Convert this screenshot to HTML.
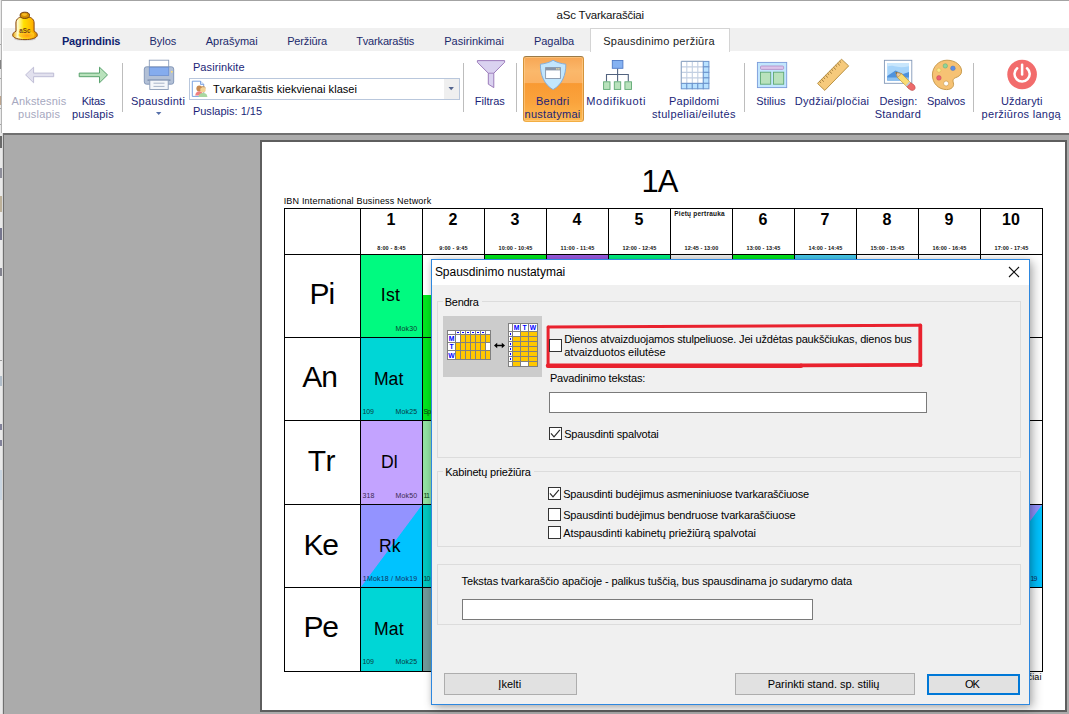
<!DOCTYPE html>
<html><head><meta charset="utf-8"><title>aSc Tvarkaraščiai</title>
<style>
html,body{margin:0;padding:0;}
body{width:1069px;height:714px;overflow:hidden;background:#ababab;position:relative;font-family:'Liberation Sans',sans-serif;}
#app{position:absolute;left:0;top:0;width:1069px;height:714px;overflow:hidden;}
#app div,#app span,#app svg{position:absolute;}
#app span{white-space:pre;}
#app div{box-sizing:border-box;}
</style></head><body><div id="app">
<div style="left:0px;top:0px;width:2px;height:714px;background:#e9e9e9;"></div>
<div style="left:1px;top:0px;width:1px;height:133px;background:#b4b4b4;"></div>
<div style="left:0px;top:60px;width:1px;height:9px;background:#555;opacity:.7;"></div>
<div style="left:0px;top:44px;width:1px;height:1px;background:#888;opacity:.7;"></div>
<div style="left:0px;top:78px;width:1px;height:1px;background:#888;opacity:.7;"></div>
<div style="left:0px;top:96px;width:1px;height:9px;background:#a86;opacity:.7;"></div>
<div style="left:0px;top:108px;width:1px;height:1px;background:#888;opacity:.7;"></div>
<div style="left:0px;top:124px;width:1px;height:1px;background:#888;opacity:.7;"></div>
<div style="left:0px;top:136px;width:2px;height:12px;background:#333;opacity:.7;"></div>
<div style="left:0px;top:168px;width:2px;height:10px;background:#667;opacity:.7;"></div>
<div style="left:0px;top:196px;width:2px;height:16px;background:#a97;opacity:.7;"></div>
<div style="left:0px;top:228px;width:2px;height:12px;background:#446;opacity:.7;"></div>
<div style="left:0px;top:268px;width:2px;height:8px;background:#556;opacity:.7;"></div>
<div style="left:0px;top:360px;width:2px;height:1px;background:#777;opacity:.7;"></div>
<div style="left:0px;top:376px;width:2px;height:10px;background:#9ab;opacity:.7;"></div>
<div style="left:0px;top:424px;width:2px;height:6px;background:#557;opacity:.7;"></div>
<div style="left:0px;top:440px;width:2px;height:6px;background:#557;opacity:.7;"></div>
<div style="left:0px;top:470px;width:2px;height:30px;background:#bcd;opacity:.7;"></div>
<div style="left:2px;top:0px;width:1067px;height:1px;background:#a3a3a3;"></div>
<div style="left:2px;top:1px;width:1067px;height:27px;background:#fff;"></div>
<div style="left:2px;top:28px;width:1067px;height:23px;background:#f0f0f0;"></div>
<div style="left:2px;top:28px;width:1px;height:23px;background:#fff;"></div>
<div style="left:2px;top:51px;width:1067px;height:82px;background:#fff;"></div>
<div style="left:3px;top:133px;width:1066px;height:2px;background:#707070;"></div>
<div style="left:3px;top:135px;width:1px;height:579px;background:#707070;"></div>
<div style="left:2px;top:133px;width:1px;height:581px;background:#d6d6d6;"></div>
<div style="left:590px;top:28px;width:140px;height:24px;background:#fff;border:1px solid #d4d4d4;border-bottom:none;"></div>
<span style="left:556.6px;top:8px;font-size:11.5px;line-height:14px;color:#111;letter-spacing:-0.23px;">aSc Tvarkaraščiai</span>
<span style="left:61.9px;top:35px;font-size:11px;line-height:13px;color:#0f1f6e;font-weight:700;letter-spacing:-0.13px;">Pagrindinis</span>
<span style="left:149.6px;top:35px;font-size:11px;line-height:13px;color:#1c2a6c;letter-spacing:-0.08px;">Bylos</span>
<span style="left:205.7px;top:35px;font-size:11px;line-height:13px;color:#1c2a6c;">Aprašymai</span>
<span style="left:287.2px;top:35px;font-size:11px;line-height:13px;color:#1c2a6c;letter-spacing:-0.16px;">Peržiūra</span>
<span style="left:356.2px;top:35px;font-size:11px;line-height:13px;color:#1c2a6c;letter-spacing:-0.16px;">Tvarkaraštis</span>
<span style="left:444.2px;top:35px;font-size:11px;line-height:13px;color:#1c2a6c;letter-spacing:0.04px;">Pasirinkimai</span>
<span style="left:534.0px;top:35px;font-size:11px;line-height:13px;color:#1c2a6c;letter-spacing:-0.05px;">Pagalba</span>
<span style="left:603.2px;top:35px;font-size:11px;line-height:13px;color:#1a1a1a;letter-spacing:0.26px;">Spausdinimo peržiūra</span>
<div style="left:122px;top:63px;width:1px;height:49px;background:#bdbdbd;"></div>
<div style="left:463px;top:63px;width:1px;height:49px;background:#bdbdbd;"></div>
<div style="left:516px;top:63px;width:1px;height:49px;background:#bdbdbd;"></div>
<div style="left:744px;top:63px;width:1px;height:49px;background:#bdbdbd;"></div>
<div style="left:973px;top:63px;width:1px;height:49px;background:#bdbdbd;"></div>
<div style="left:189px;top:78px;width:271px;height:22px;background:#fff;border:1px solid #b9c7dc;"></div>
<div style="left:444px;top:79px;width:15px;height:20px;background:#efefef;"></div>
<svg style="left:8px;top:6px" width="40" height="40" viewBox="8 6 40 40" ><defs><linearGradient id="bg1" x1="0" x2="1" y1="0" y2="0"><stop offset="0" stop-color="#e8a400"/><stop offset=".2" stop-color="#fffbd0"/><stop offset=".45" stop-color="#ffe000"/><stop offset=".8" stop-color="#ffb400"/><stop offset="1" stop-color="#d88a00"/></linearGradient>
<radialGradient id="bg2" cx=".55" cy=".6" r=".6"><stop offset="0" stop-color="#ff9a10"/><stop offset="1" stop-color="#ffd820"/></radialGradient></defs>
<ellipse cx="25" cy="39" rx="11" ry="1.6" fill="#999" opacity=".45"/>
<path d="M16 31.200L15.900 23C15.900 18.500 19.500 16.600 24.900 16.600C30.300 16.600 34.100 18.500 34.100 23L34.100 31.200C36.600 32.300 37.300 33.800 37.300 35.200C37.300 38 31.500 39.600 25 39.600C18.500 39.600 12.700 38 12.700 35.200C12.700 33.800 13.400 32.300 16 31.200Z" fill="url(#bg1)" stroke="#8a4810" stroke-width="1"/>
<ellipse cx="26.500" cy="35" rx="8" ry="3.400" fill="url(#bg2)" opacity=".95"/>
<ellipse cx="24.800" cy="15.300" rx="4.700" ry="3.100" fill="#d48e00" stroke="#703c0c" stroke-width="1"/>
<ellipse cx="24.5" cy="14.6" rx="2.6" ry="1.3" fill="#ffc830" opacity=".8"/>
<text x="24.9" y="32.6" font-family="Liberation Sans,sans-serif" font-weight="700" font-size="6.300" fill="#7a3e10" text-anchor="middle">aSc</text></svg>
<svg style="left:22px;top:64px" width="90" height="22" viewBox="22 64 90 22" ><path d="M25.6 74.9L33.6 67.2V73.1H53.7V76.7H33.6V82.8Z" fill="#e2e1ee" stroke="#bab8d2" stroke-width=".9" stroke-linejoin="miter"/>
<path d="M107.5 74.9L99.5 67.2V73.1H79.2V76.7H99.5V82.8Z" fill="#b9e2bc" stroke="#4c9a62" stroke-width=".9"/></svg>
<svg style="left:142px;top:58px" width="34" height="34" viewBox="142 58 34 34" ><rect x="149.3" y="60.2" width="19.4" height="9" fill="#fff" stroke="#8a9cb8" stroke-width=".9"/>
<rect x="144.3" y="66.8" width="29.4" height="17.4" rx="2.2" fill="#b2c0d6" stroke="#7e92b4" stroke-width=".9"/>
<rect x="149.3" y="67.3" width="19.4" height="8.2" fill="#85acee" stroke="#6c8fd0" stroke-width=".8"/>
<rect x="171" y="71" width="1.6" height="1.6" fill="#ffe070"/>
<rect x="147.5" y="79.4" width="23" height="1.6" fill="#8496b4"/>
<rect x="149.8" y="80.2" width="18.4" height="9.3" fill="#f4f6fa" stroke="#8a9cb8" stroke-width=".9"/>
<path d="M153.5 83.2h11M153.5 86.4h11" stroke="#a8b4c8" stroke-width="1"/>
<path d="M156 112h5.2l-2.6 2.8z" fill="#4e6aa8"/></svg>
<svg style="left:155px;top:111px" width="8" height="5" viewBox="0 0 8 5"><path d="M1 1h5.4L3.7 4z" fill="#5670aa"/></svg>
<svg style="left:190px;top:80px" width="20" height="19" viewBox="190 80 20 19" ><path d="M192.3 81.2h8.2l3.2 3.2v12h-11.4z" fill="#fff" stroke="#5a8ad8" stroke-width=".8"/><path d="M200.5 81.2v3.2h3.2" fill="#dce8fa" stroke="#5a8ad8" stroke-width=".7"/>
<circle cx="199.3" cy="88.5" r="2.9" fill="#c88a50"/><path d="M195.2 95.6c.4-3.4 2-4.4 4.1-4.4s3.6 1 4 4.4z" fill="#f08080"/>
<circle cx="203" cy="89.8" r="2.7" fill="#f4d294"/><path d="M200.8 87.8c1-1.6 3.8-1.6 4.8.2" stroke="#c89050" stroke-width="1" fill="none"/><path d="M198.6 97c.4-3.2 2-4 4.4-4s4 .8 4.4 4z" fill="#a8d8a0"/></svg>
<svg style="left:474px;top:58px" width="34" height="32" viewBox="474 58 34 32" ><path d="M477.4 60.6H504.6V62.3L493.8 73.2V87.6L488.3 84.2V73.2L477.4 62.3Z" fill="#dad2f0" stroke="#936fb4" stroke-width=".9" stroke-linejoin="round"/><path d="M488.3 73.2H493.8" stroke="#936fb4" stroke-width=".8"/></svg>
<div style="left:523px;top:56px;width:61px;height:66px;background:#f9a53f;border:1px solid #d4933a;border-top-color:#9a7a48;border-bottom-color:#f3ae42;border-radius:3px;background:linear-gradient(#f7a654 0%,#fbb86b 22%,#fbb162 40.5%,#f99a33 41.5%,#faa33c 70%,#fdb850 100%);box-shadow:inset 0 0 0 1px rgba(255,214,150,.55);"></div>
<svg style="left:538px;top:58px" width="30" height="34" viewBox="538 58 30 34" ><path d="M553.1 60.3C557 62.6 561 63.6 565.8 64.2C566 75 562 84.5 553.1 89.6C544.2 84.5 540.2 75 540.4 64.2C545.2 63.6 549.2 62.6 553.1 60.3Z" fill="#c2e6fd" stroke="#7daadc" stroke-width=".9"/>
<rect x="545.6" y="67.6" width="14.8" height="10.9" fill="#fff" stroke="#8796aa" stroke-width=".9"/><rect x="545.6" y="67.6" width="14.8" height="2.8" fill="#8796aa"/><rect x="556.2" y="68.2" width="1.3" height="1.3" fill="#ffe9a0"/><rect x="558.2" y="68.2" width="1.3" height="1.3" fill="#ffe9a0"/></svg>
<svg style="left:601px;top:58px" width="33" height="34" viewBox="601 58 33 34" ><path d="M617.6 68.4V81.5M606.5 81.5V74.5H628.3V81.5" stroke="#52637f" stroke-width="1.1" fill="none"/>
<rect x="612.3" y="60.5" width="10.6" height="7.8" fill="#85b2f2" stroke="#4f7ac6" stroke-width=".9"/>
<rect x="603.6" y="81.8" width="6.4" height="7.6" fill="#b9e2bc" stroke="#5fa873" stroke-width=".9"/>
<rect x="614.3" y="81.8" width="6.4" height="7.6" fill="#b9e2bc" stroke="#5fa873" stroke-width=".9"/>
<rect x="624.9" y="81.8" width="6.6" height="7.6" fill="#b9e2bc" stroke="#5fa873" stroke-width=".9"/></svg>
<svg style="left:679px;top:59px" width="32" height="32" viewBox="679 59 32 32" ><rect x="681.3" y="61.4" width="27.6" height="27.2" fill="#fff"/><path d="M681.3 61.4V83.4M681.3 61.4H703.3" stroke="#c3d0e2" stroke-width="1.1"/><path d="M686.8 61.4V83.4M681.3 66.9H703.3" stroke="#c3d0e2" stroke-width="1.1"/><path d="M692.3 61.4V83.4M681.3 72.4H703.3" stroke="#c3d0e2" stroke-width="1.1"/><path d="M697.8 61.4V83.4M681.3 77.9H703.3" stroke="#c3d0e2" stroke-width="1.1"/><path d="M703.3 61.4V83.4M681.3 83.4H703.3" stroke="#c3d0e2" stroke-width="1.1"/><rect x="703.3" y="61.4" width="5.6" height="5.4" fill="#b9e2ff" stroke="#6c94cc" stroke-width="1"/><rect x="681.3" y="83.4" width="5.5" height="5.4" fill="#b9e2ff" stroke="#6c94cc" stroke-width="1"/><rect x="703.3" y="66.9" width="5.6" height="5.4" fill="#b9e2ff" stroke="#6c94cc" stroke-width="1"/><rect x="686.8" y="83.4" width="5.5" height="5.4" fill="#b9e2ff" stroke="#6c94cc" stroke-width="1"/><rect x="703.3" y="72.4" width="5.6" height="5.4" fill="#b9e2ff" stroke="#6c94cc" stroke-width="1"/><rect x="692.3" y="83.4" width="5.5" height="5.4" fill="#b9e2ff" stroke="#6c94cc" stroke-width="1"/><rect x="703.3" y="77.9" width="5.6" height="5.4" fill="#b9e2ff" stroke="#6c94cc" stroke-width="1"/><rect x="697.8" y="83.4" width="5.5" height="5.4" fill="#b9e2ff" stroke="#6c94cc" stroke-width="1"/><rect x="703.3" y="83.4" width="5.6" height="5.4" fill="#b9e2ff" stroke="#6c94cc" stroke-width="1"/><path d="M681.3 83.4V61.4H703.3" stroke="#8aa0c0" stroke-width=".9" fill="none"/></svg>
<svg style="left:755px;top:60px" width="34" height="30" viewBox="755 60 34 30" ><rect x="757.4" y="62.4" width="29.3" height="25.2" fill="#c2e6fd" stroke="#7a9ada" stroke-width=".9"/>
<rect x="760.5" y="66" width="23.1" height="3.4" rx="1" fill="#dcc4ea" stroke="#b292ca" stroke-width=".9"/>
<rect x="760.5" y="72.2" width="10.2" height="12" fill="#b9e2bc" stroke="#5fa873" stroke-width=".9"/>
<rect x="773.5" y="72.2" width="10.2" height="12" fill="#b9e2bc" stroke="#5fa873" stroke-width=".9"/></svg>
<svg style="left:815px;top:57px" width="36" height="36" viewBox="815 57 36 36" ><path d="M841.5 59.2L848.7 65.9L824.8 90.4L817.5 83.4Z" fill="#f6ca7c" stroke="#b28a3a" stroke-width=".9" stroke-linejoin="round"/><path d="M819.5 81.4l1.6 1.5" stroke="#8a6424" stroke-width=".8"/><path d="M821.5 79.4l2.3 2.2" stroke="#8a6424" stroke-width=".8"/><path d="M823.5 77.4l1.6 1.5" stroke="#8a6424" stroke-width=".8"/><path d="M825.5 75.3l2.3 2.2" stroke="#8a6424" stroke-width=".8"/><path d="M827.5 73.3l1.6 1.5" stroke="#8a6424" stroke-width=".8"/><path d="M829.5 71.3l2.3 2.2" stroke="#8a6424" stroke-width=".8"/><path d="M831.5 69.3l1.6 1.5" stroke="#8a6424" stroke-width=".8"/><path d="M833.5 67.3l2.3 2.2" stroke="#8a6424" stroke-width=".8"/><path d="M835.5 65.2l1.6 1.5" stroke="#8a6424" stroke-width=".8"/><path d="M837.5 63.2l2.3 2.2" stroke="#8a6424" stroke-width=".8"/><path d="M839.5 61.2l1.6 1.5" stroke="#8a6424" stroke-width=".8"/></svg>
<svg style="left:882px;top:58px" width="36" height="36" viewBox="882 58 36 36" ><rect x="884.4" y="60.3" width="27.4" height="23" fill="#fff" stroke="#8298b8" stroke-width=".9"/>
<rect x="887.2" y="63" width="21.8" height="17.4" fill="#a6d4fa"/><path d="M887.2 66.5c4-1.6 7-.4 10.5.3s7 .2 11.300-.6V63H887.2Z" fill="#c8e6fc"/>
<path d="M887.2 76L895.5 70.5L903 74L909 72V80.400H887.2Z" fill="#4f92dc"/><path d="M887.2 77.500H909V80.400H887.2Z" fill="#8cc0f0"/>
<path d="M895.8 72.300L901.600 73.700L912.800 84.800L908.800 88.600L897.500 77.600Z" fill="#f9dc74" stroke="#c0983c" stroke-width=".7"/>
<path d="M895.8 72.300L901.600 73.700L897.500 77.600Z" fill="#e8c8a0" stroke="#b08850" stroke-width=".6"/><path d="M895.8 72.300L897.6 72.800L896.300 74Z" fill="#555"/>
<path d="M910.600 82.700L906.800 86.600L909.200 89C911 90.800 913.200 90.800 914.400 89.600C915.600 88.400 915.400 86.400 913.600 84.600Z" fill="#ee6a6a" stroke="#b84848" stroke-width=".6"/>
<path d="M909.400 81.500L905.600 85.400L906.800 86.600L910.600 82.700Z" fill="#c0c8d8"/></svg>
<svg style="left:930px;top:58px" width="34" height="34" viewBox="930 58 34 34" ><path d="M947 60.200C955.500 60.200 961.600 65.400 961.600 71.200C961.600 75 958.500 76.600 955.800 77.600C953 78.600 952.600 80.400 953.400 83C954.400 86.400 951.600 89.600 946.600 89.600C938.400 89.600 932.400 83.200 932.400 75C932.400 66.800 938.800 60.200 947 60.200Z" fill="#f6c274" stroke="#c29444" stroke-width=".9"/>
<circle cx="945.3" cy="65.9" r="2.2" fill="#8fd49a" stroke="#5fa873" stroke-width=".5"/><circle cx="952.9" cy="68.300" r="2.3" fill="#5c8fe6" stroke="#4c74c0" stroke-width=".5"/>
<circle cx="938.9" cy="70.200" r="2.1" fill="#fbe88a" stroke="#d0b050" stroke-width=".5"/><circle cx="938.9" cy="77.900" r="2.300" fill="#ee6070" stroke="#c04858" stroke-width=".5"/>
<circle cx="946.1" cy="83.500" r="2.500" fill="#fff" stroke="#c29444" stroke-width=".6"/></svg>
<svg style="left:1005px;top:58px" width="34" height="34" viewBox="1005 58 34 34" ><circle cx="1022.1" cy="74.500" r="14.800" fill="#f26c6c"/>
<path d="M1017.200 68.200A7.600 7.600 0 1 0 1027 68.200" fill="none" stroke="#fff" stroke-width="2.500" stroke-linecap="round"/><path d="M1022.100 64.800V74.600" stroke="#fff" stroke-width="2.500" stroke-linecap="round"/></svg>
<span style="left:11.4px;top:95px;font-size:11px;line-height:13px;color:#a6a8c0;letter-spacing:0.18px;">Ankstesnis</span>
<span style="left:18.1px;top:108px;font-size:11px;line-height:13px;color:#a6a8c0;letter-spacing:0.22px;">puslapis</span>
<span style="left:81.7px;top:95px;font-size:11px;line-height:13px;color:#1b1f78;letter-spacing:-0.21px;">Kitas</span>
<span style="left:72.0px;top:108px;font-size:11px;line-height:13px;color:#1b1f78;letter-spacing:0.19px;">puslapis</span>
<span style="left:130.9px;top:95px;font-size:11px;line-height:13px;color:#1b1f78;letter-spacing:0.29px;">Spausdinti</span>
<span style="left:192.9px;top:61px;font-size:11px;line-height:13px;color:#1b1f78;letter-spacing:0.10px;">Pasirinkite</span>
<span style="left:192.9px;top:105px;font-size:11px;line-height:13px;color:#1b1f78;letter-spacing:0.01px;">Puslapis: 1/15</span>
<svg style="left:448px;top:87px" width="7" height="4" viewBox="0 0 7 4"><path d="M.500 0h5.400L3.200 3.200z" fill="#53648e"/></svg>
<span style="left:213.1px;top:83px;font-size:11px;line-height:13px;color:#000;letter-spacing:0.05px;">Tvarkaraštis kiekvienai klasei</span>
<span style="left:474.8px;top:95px;font-size:11px;line-height:13px;color:#1b1f78;letter-spacing:0.02px;">Filtras</span>
<span style="left:536.0px;top:95px;font-size:11px;line-height:13px;color:#1b1f78;letter-spacing:0.27px;">Bendri</span>
<span style="left:524.5px;top:108px;font-size:11px;line-height:13px;color:#1b1f78;letter-spacing:0.29px;">nustatymai</span>
<span style="left:586.3px;top:95px;font-size:11px;line-height:13px;color:#1b1f78;letter-spacing:0.65px;">Modifikuoti</span>
<span style="left:669.1px;top:95px;font-size:11px;line-height:13px;color:#1b1f78;letter-spacing:0.18px;">Papildomi</span>
<span style="left:651.9px;top:108px;font-size:11px;line-height:13px;color:#1b1f78;letter-spacing:0.35px;">stulpeliai/eilutės</span>
<span style="left:756.3px;top:95px;font-size:11px;line-height:13px;color:#1b1f78;letter-spacing:-0.01px;">Stilius</span>
<span style="left:794.8px;top:95px;font-size:11px;line-height:13px;color:#1b1f78;letter-spacing:0.28px;">Dydžiai/pločiai</span>
<span style="left:879.4px;top:95px;font-size:11px;line-height:13px;color:#1b1f78;letter-spacing:0.09px;">Design:</span>
<span style="left:874.8px;top:108px;font-size:11px;line-height:13px;color:#1b1f78;letter-spacing:0.19px;">Standard</span>
<span style="left:927.1px;top:95px;font-size:11px;line-height:13px;color:#1b1f78;letter-spacing:-0.18px;">Spalvos</span>
<span style="left:1001.0px;top:95px;font-size:11px;line-height:13px;color:#1b1f78;letter-spacing:0.16px;">Uždaryti</span>
<span style="left:981.6px;top:108px;font-size:11px;line-height:13px;color:#1b1f78;letter-spacing:0.28px;">peržiūros langą</span>
<div style="left:260px;top:140px;width:807px;height:572px;background:#fff;border:2px solid #5e5e5e;"></div>
<span style="left:641.6px;top:163px;font-size:31px;line-height:37px;color:#000;letter-spacing:-1.20px;">1A</span>
<span style="left:283.7px;top:196px;font-size:9px;line-height:11px;color:#000;letter-spacing:0.18px;">IBN International Business Network</span>
<div style="left:361px;top:255px;width:61px;height:82px;background:#00fa80;"></div>
<div style="left:361px;top:338px;width:61px;height:82px;background:#00d6d6;"></div>
<div style="left:361px;top:421px;width:61px;height:83px;background:#c3a3ff;"></div>
<div style="left:361px;top:588px;width:61px;height:83px;background:#00d6d6;"></div>
<div style="left:361px;top:505px;width:61px;height:82px;background:#00c3ff;background:linear-gradient(to bottom right,#9393ff 49.6%,#00c3ff 50.4%);"></div>
<div style="left:981px;top:505px;width:61px;height:82px;background:#00c3ff;background:linear-gradient(to bottom right,#9393ff 49.6%,#00c3ff 50.4%);"></div>
<div style="left:423px;top:295px;width:61px;height:42px;background:#00e61e;"></div>
<div style="left:423px;top:338px;width:61px;height:82px;background:#00e61e;"></div>
<div style="left:423px;top:421px;width:61px;height:83px;background:#92e2a2;"></div>
<div style="left:423px;top:505px;width:61px;height:82px;background:#00c8c0;"></div>
<div style="left:423px;top:588px;width:61px;height:83px;background:#6f9a9a;"></div>
<div style="left:485px;top:255px;width:61px;height:82px;background:#00e61e;"></div>
<div style="left:547px;top:255px;width:61px;height:82px;background:#9a5ae0;"></div>
<div style="left:609px;top:255px;width:61px;height:82px;background:#00f080;"></div>
<div style="left:671px;top:255px;width:61px;height:82px;background:#ececec;"></div>
<div style="left:733px;top:255px;width:61px;height:82px;background:#00e61e;"></div>
<div style="left:795px;top:255px;width:61px;height:82px;background:#45c8ea;"></div>
<div style="left:284px;top:208px;width:1px;height:464px;background:#000;"></div>
<div style="left:360px;top:208px;width:1px;height:464px;background:#000;"></div>
<div style="left:422px;top:208px;width:1px;height:464px;background:#000;"></div>
<div style="left:484px;top:208px;width:1px;height:464px;background:#000;"></div>
<div style="left:546px;top:208px;width:1px;height:464px;background:#000;"></div>
<div style="left:608px;top:208px;width:1px;height:464px;background:#000;"></div>
<div style="left:670px;top:208px;width:1px;height:464px;background:#000;"></div>
<div style="left:732px;top:208px;width:1px;height:464px;background:#000;"></div>
<div style="left:794px;top:208px;width:1px;height:464px;background:#000;"></div>
<div style="left:856px;top:208px;width:1px;height:464px;background:#000;"></div>
<div style="left:918px;top:208px;width:1px;height:464px;background:#000;"></div>
<div style="left:980px;top:208px;width:1px;height:464px;background:#000;"></div>
<div style="left:1042px;top:208px;width:1px;height:464px;background:#000;"></div>
<div style="left:284px;top:208px;width:759px;height:1px;background:#000;"></div>
<div style="left:284px;top:254px;width:759px;height:1px;background:#000;"></div>
<div style="left:284px;top:337px;width:759px;height:1px;background:#000;"></div>
<div style="left:284px;top:420px;width:759px;height:1px;background:#000;"></div>
<div style="left:284px;top:504px;width:759px;height:1px;background:#000;"></div>
<div style="left:284px;top:587px;width:759px;height:1px;background:#000;"></div>
<div style="left:284px;top:671px;width:759px;height:1px;background:#000;"></div>
<span style="left:386.5px;top:210px;font-size:16px;line-height:19px;color:#000;font-weight:700;letter-spacing:-0.11px;">1</span>
<span style="left:377.2px;top:245px;font-size:5.5px;line-height:7px;color:#111;font-weight:700;letter-spacing:0.15px;">8:00 - 8:45</span>
<span style="left:448.5px;top:210px;font-size:16px;line-height:19px;color:#000;font-weight:700;letter-spacing:-0.11px;">2</span>
<span style="left:439.2px;top:245px;font-size:5.5px;line-height:7px;color:#111;font-weight:700;letter-spacing:0.15px;">9:00 - 9:45</span>
<span style="left:510.5px;top:210px;font-size:16px;line-height:19px;color:#000;font-weight:700;letter-spacing:-0.11px;">3</span>
<span style="left:498.6px;top:245px;font-size:5.5px;line-height:7px;color:#111;font-weight:700;letter-spacing:0.05px;">10:00 - 10:45</span>
<span style="left:572.5px;top:210px;font-size:16px;line-height:19px;color:#000;font-weight:700;letter-spacing:-0.11px;">4</span>
<span style="left:560.6px;top:245px;font-size:5.5px;line-height:7px;color:#111;font-weight:700;letter-spacing:0.10px;">11:00 - 11:45</span>
<span style="left:634.5px;top:210px;font-size:16px;line-height:19px;color:#000;font-weight:700;letter-spacing:-0.11px;">5</span>
<span style="left:622.6px;top:245px;font-size:5.5px;line-height:7px;color:#111;font-weight:700;letter-spacing:0.05px;">12:00 - 12:45</span>
<span style="left:684.6px;top:245px;font-size:5.5px;line-height:7px;color:#111;font-weight:700;letter-spacing:0.05px;">12:45 - 13:00</span>
<span style="left:758.5px;top:210px;font-size:16px;line-height:19px;color:#000;font-weight:700;letter-spacing:-0.11px;">6</span>
<span style="left:746.6px;top:245px;font-size:5.5px;line-height:7px;color:#111;font-weight:700;letter-spacing:0.05px;">13:00 - 13:45</span>
<span style="left:820.5px;top:210px;font-size:16px;line-height:19px;color:#000;font-weight:700;letter-spacing:-0.11px;">7</span>
<span style="left:808.6px;top:245px;font-size:5.5px;line-height:7px;color:#111;font-weight:700;letter-spacing:0.05px;">14:00 - 14:45</span>
<span style="left:882.5px;top:210px;font-size:16px;line-height:19px;color:#000;font-weight:700;letter-spacing:-0.11px;">8</span>
<span style="left:870.6px;top:245px;font-size:5.5px;line-height:7px;color:#111;font-weight:700;letter-spacing:0.05px;">15:00 - 15:45</span>
<span style="left:944.5px;top:210px;font-size:16px;line-height:19px;color:#000;font-weight:700;letter-spacing:-0.11px;">9</span>
<span style="left:932.6px;top:245px;font-size:5.5px;line-height:7px;color:#111;font-weight:700;letter-spacing:0.05px;">16:00 - 16:45</span>
<span style="left:1002.1px;top:210px;font-size:16px;line-height:19px;color:#000;font-weight:700;letter-spacing:-0.10px;">10</span>
<span style="left:994.6px;top:245px;font-size:5.5px;line-height:7px;color:#111;font-weight:700;letter-spacing:0.05px;">17:00 - 17:45</span>
<span style="left:674.3px;top:210px;font-size:6.5px;line-height:8px;color:#111;font-weight:700;letter-spacing:0.22px;">Pietų pertrauka</span>
<span style="left:309.6px;top:276px;font-size:30px;line-height:36px;color:#000;letter-spacing:-1.20px;">Pi</span>
<span style="left:302.2px;top:359px;font-size:30px;line-height:36px;color:#000;letter-spacing:-1.05px;">An</span>
<span style="left:307.8px;top:443px;font-size:30px;line-height:36px;color:#000;letter-spacing:0.60px;">Tr</span>
<span style="left:303.4px;top:527px;font-size:30px;line-height:36px;color:#000;letter-spacing:-1.20px;">Ke</span>
<span style="left:303.4px;top:609px;font-size:30px;line-height:36px;color:#000;letter-spacing:-1.20px;">Pe</span>
<span style="left:380.7px;top:285px;font-size:17.6px;line-height:21px;color:#000;letter-spacing:0.37px;">Ist</span>
<span style="left:373.9px;top:369px;font-size:17.6px;line-height:21px;color:#000;letter-spacing:0.05px;">Mat</span>
<span style="left:380.9px;top:452px;font-size:17.6px;line-height:21px;color:#000;letter-spacing:0.14px;">Dl</span>
<span style="left:379.1px;top:536px;font-size:17.6px;line-height:21px;color:#000;letter-spacing:-0.11px;">Rk</span>
<span style="left:373.9px;top:619px;font-size:17.6px;line-height:21px;color:#000;letter-spacing:0.15px;">Mat</span>
<span style="left:395.4px;top:325px;font-size:7px;line-height:8px;color:#0a4030;letter-spacing:0.20px;">Mok30</span>
<span style="left:362.4px;top:408px;font-size:7px;line-height:8px;color:#063a40;letter-spacing:-0.06px;">109</span>
<span style="left:395.4px;top:408px;font-size:7px;line-height:8px;color:#063a40;letter-spacing:0.20px;">Mok25</span>
<span style="left:362.4px;top:492px;font-size:7px;line-height:8px;color:#3a2a50;letter-spacing:0.10px;">318</span>
<span style="left:395.4px;top:492px;font-size:7px;line-height:8px;color:#3a2a50;letter-spacing:0.20px;">Mok50</span>
<span style="left:362.8px;top:575px;font-size:7px;line-height:8px;color:#123060;letter-spacing:0.20px;">1Mok18 / Mok19</span>
<span style="left:362.4px;top:658px;font-size:7px;line-height:8px;color:#063a40;letter-spacing:-0.06px;">109</span>
<span style="left:395.4px;top:658px;font-size:7px;line-height:8px;color:#063a40;letter-spacing:0.20px;">Mok25</span>
<span style="left:423.4px;top:408px;font-size:7px;line-height:8px;color:#064010;letter-spacing:-0.78px;">Sp</span>
<span style="left:423.4px;top:492px;font-size:7px;line-height:8px;color:#064010;letter-spacing:-0.64px;">11</span>
<span style="left:423.4px;top:575px;font-size:7px;line-height:8px;color:#063a40;letter-spacing:-0.90px;">10</span>
<span style="left:1030.4px;top:575px;font-size:7px;line-height:8px;color:#123060;letter-spacing:-0.90px;">19</span>
<span style="left:969.4px;top:672px;font-size:9px;line-height:11px;color:#000;letter-spacing:0.04px;">aSc Tvarkaraščiai</span>
<div style="left:431px;top:259px;width:599px;height:446px;background:#f0f0f0;border:1px solid #2d87df;box-shadow:3px 3px 10px rgba(0,0,0,.30),0 0 5px rgba(0,0,0,.10);"></div>
<div style="left:432px;top:260px;width:597px;height:25px;background:#fff;"></div>
<span style="left:434.9px;top:265px;font-size:12px;line-height:14px;color:#000;letter-spacing:-0.02px;">Spausdinimo nustatymai</span>
<svg style="left:1008px;top:266px" width="12" height="12" viewBox="0 0 12 12"><path d="M1 1L11 11M11 1L1 11" stroke="#111" stroke-width="1.1" fill="none"/></svg>
<div style="left:437px;top:301px;width:584px;height:157px;background:transparent;border:1px solid #dcdcdc;"></div>
<div style="left:437px;top:471px;width:584px;height:76px;background:transparent;border:1px solid #dcdcdc;"></div>
<div style="left:437px;top:564px;width:584px;height:61px;background:transparent;border:1px solid #dcdcdc;"></div>
<div style="left:443px;top:296px;width:39px;height:12px;background:#f0f0f0;"></div>
<span style="left:444.8px;top:296px;font-size:11px;line-height:13px;color:#000;letter-spacing:-0.28px;">Bendra</span>
<div style="left:443px;top:466px;width:91px;height:12px;background:#f0f0f0;"></div>
<span style="left:445.2px;top:466px;font-size:11px;line-height:13px;color:#000;letter-spacing:-0.18px;">Kabinetų priežiūra</span>
<div style="left:443px;top:316px;width:99px;height:61px;background:#cccccc;"></div>
<svg style="left:443px;top:316px" width="99" height="61" viewBox="443 316 99 61" shape-rendering="crispEdges"><rect x="447" y="330" width="44" height="30" fill="#808080"/><rect x="448" y="331" width="7" height="3" fill="#fff"/><rect x="456" y="331" width="4" height="3" fill="#fff"/><rect x="457" y="332" width="2" height="1" fill="#00f"/><rect x="461" y="331" width="4" height="3" fill="#fff"/><rect x="462" y="332" width="2" height="1" fill="#00f"/><rect x="466" y="331" width="4" height="3" fill="#fff"/><rect x="467" y="332" width="2" height="1" fill="#00f"/><rect x="471" y="331" width="4" height="3" fill="#fff"/><rect x="472" y="332" width="2" height="1" fill="#00f"/><rect x="476" y="331" width="4" height="3" fill="#fff"/><rect x="477" y="332" width="2" height="1" fill="#00f"/><rect x="481" y="331" width="4" height="3" fill="#fff"/><rect x="482" y="332" width="2" height="1" fill="#00f"/><rect x="486" y="331" width="4" height="3" fill="#fff"/><rect x="448" y="335" width="7" height="7" fill="#fff"/><rect x="456" y="335" width="4" height="7" fill="#fff"/><rect x="461" y="335" width="4" height="7" fill="#ffc800"/><rect x="466" y="335" width="4" height="7" fill="#ffc800"/><rect x="471" y="335" width="4" height="7" fill="#ffc800"/><rect x="476" y="335" width="4" height="7" fill="#ffc800"/><rect x="481" y="335" width="4" height="7" fill="#ffc800"/><rect x="486" y="335" width="4" height="7" fill="#ffc800"/><rect x="448" y="343" width="7" height="7" fill="#fff"/><rect x="456" y="343" width="4" height="7" fill="#ffc800"/><rect x="461" y="343" width="4" height="7" fill="#ffc800"/><rect x="466" y="343" width="4" height="7" fill="#ffc800"/><rect x="471" y="343" width="4" height="7" fill="#ffc800"/><rect x="476" y="343" width="4" height="7" fill="#ffc800"/><rect x="481" y="343" width="4" height="7" fill="#ffc800"/><rect x="486" y="343" width="4" height="7" fill="#fff"/><rect x="448" y="351" width="7" height="8" fill="#fff"/><rect x="456" y="351" width="4" height="8" fill="#ffc800"/><rect x="461" y="351" width="4" height="8" fill="#ffc800"/><rect x="466" y="351" width="4" height="8" fill="#ffc800"/><rect x="471" y="351" width="4" height="8" fill="#ffc800"/><rect x="476" y="351" width="4" height="8" fill="#ffc800"/><rect x="481" y="351" width="4" height="8" fill="#ffc800"/><rect x="486" y="351" width="4" height="8" fill="#ffc800"/><rect x="508" y="323" width="30" height="44" fill="#808080"/><rect x="509" y="324" width="3" height="7" fill="#fff"/><rect x="513" y="324" width="7" height="7" fill="#fff"/><rect x="521" y="324" width="7" height="7" fill="#fff"/><rect x="529" y="324" width="8" height="7" fill="#fff"/><rect x="509" y="332" width="3" height="4" fill="#fff"/><rect x="510" y="333" width="1" height="2" fill="#00f"/><rect x="513" y="332" width="7" height="4" fill="#fff"/><rect x="521" y="332" width="7" height="4" fill="#ffc800"/><rect x="529" y="332" width="8" height="4" fill="#ffc800"/><rect x="509" y="337" width="3" height="4" fill="#fff"/><rect x="510" y="338" width="1" height="2" fill="#00f"/><rect x="513" y="337" width="7" height="4" fill="#ffc800"/><rect x="521" y="337" width="7" height="4" fill="#ffc800"/><rect x="529" y="337" width="8" height="4" fill="#ffc800"/><rect x="509" y="342" width="3" height="4" fill="#fff"/><rect x="510" y="343" width="1" height="2" fill="#00f"/><rect x="513" y="342" width="7" height="4" fill="#ffc800"/><rect x="521" y="342" width="7" height="4" fill="#ffc800"/><rect x="529" y="342" width="8" height="4" fill="#ffc800"/><rect x="509" y="347" width="3" height="4" fill="#fff"/><rect x="510" y="348" width="1" height="2" fill="#00f"/><rect x="513" y="347" width="7" height="4" fill="#ffc800"/><rect x="521" y="347" width="7" height="4" fill="#ffc800"/><rect x="529" y="347" width="8" height="4" fill="#ffc800"/><rect x="509" y="352" width="3" height="4" fill="#fff"/><rect x="510" y="353" width="1" height="2" fill="#00f"/><rect x="513" y="352" width="7" height="4" fill="#ffc800"/><rect x="521" y="352" width="7" height="4" fill="#ffc800"/><rect x="529" y="352" width="8" height="4" fill="#ffc800"/><rect x="509" y="357" width="3" height="4" fill="#fff"/><rect x="510" y="358" width="1" height="2" fill="#00f"/><rect x="513" y="357" width="7" height="4" fill="#ffc800"/><rect x="521" y="357" width="7" height="4" fill="#ffc800"/><rect x="529" y="357" width="8" height="4" fill="#ffc800"/><rect x="509" y="362" width="3" height="4" fill="#fff"/><rect x="513" y="362" width="7" height="4" fill="#ffc800"/><rect x="521" y="362" width="7" height="4" fill="#fff"/><rect x="529" y="362" width="8" height="4" fill="#ffc800"/><path d="M494 345.500l3.200-2.800v2.100h4.600v-2.100l3.200 2.800-3.200 2.800v-2.100h-4.600v2.100z" fill="#000" shape-rendering="auto"/><text x="451.5" y="341.3" font-family="Liberation Sans,sans-serif" font-weight="700" font-size="6.8" fill="#00f" text-anchor="middle" shape-rendering="auto">M</text><text x="451.5" y="349.3" font-family="Liberation Sans,sans-serif" font-weight="700" font-size="6.8" fill="#00f" text-anchor="middle" shape-rendering="auto">T</text><text x="451.5" y="357.6" font-family="Liberation Sans,sans-serif" font-weight="700" font-size="6.8" fill="#00f" text-anchor="middle" shape-rendering="auto">W</text><text x="516.5" y="330.3" font-family="Liberation Sans,sans-serif" font-weight="700" font-size="6.8" fill="#00f" text-anchor="middle" shape-rendering="auto">M</text><text x="524.5" y="330.3" font-family="Liberation Sans,sans-serif" font-weight="700" font-size="6.8" fill="#00f" text-anchor="middle" shape-rendering="auto">T</text><text x="533" y="330.3" font-family="Liberation Sans,sans-serif" font-weight="700" font-size="6.8" fill="#00f" text-anchor="middle" shape-rendering="auto">W</text></svg>
<svg style="left:540px;top:318px" width="390" height="56" viewBox="540 318 390 56"><g stroke="#e9222e" fill="none" stroke-linecap="round"><path d="M548.2 327L920 325.300" stroke-width="3"/><path d="M548.100 327V366" stroke-width="3"/><path d="M920.300 325.500V365" stroke-width="3.800"/><path d="M548 365.800H801" stroke-width="4.400"/><path d="M801 365.300L920.500 364.900" stroke-width="3.700"/></g></svg>
<div style="left:549px;top:339px;width:13px;height:13px;background:#fff;background:#fff;border:1px solid #333;"></div>
<span style="left:564.2px;top:333px;font-size:11px;line-height:13px;color:#000;letter-spacing:-0.17px;">Dienos atvaizduojamos stulpeliuose. Jei uždėtas paukščiukas, dienos bus</span>
<span style="left:564.2px;top:346px;font-size:11px;line-height:13px;color:#000;letter-spacing:-0.07px;">atvaizduotos eilutėse</span>
<span style="left:549.9px;top:372px;font-size:11px;line-height:13px;color:#000;letter-spacing:-0.17px;">Pavadinimo tekstas:</span>
<div style="left:549px;top:392px;width:378px;height:21px;background:#fff;border:1px solid #7a7a7a;"></div>
<div style="left:549px;top:427px;width:13px;height:13px;background:#fff;background:#fff;border:1px solid #333;"></div>
<svg style="left:549px;top:427px" width="13" height="13" viewBox="0 0 13 13"><path d="M2 6.400L5 9.900L10.900 2.800" stroke="#2a2a2a" stroke-width="1.150" fill="none"/></svg>
<span style="left:564.2px;top:428px;font-size:11px;line-height:13px;color:#000;letter-spacing:-0.17px;">Spausdinti spalvotai</span>
<div style="left:548px;top:487px;width:13px;height:13px;background:#fff;background:#fff;border:1px solid #333;"></div>
<svg style="left:548px;top:487px" width="13" height="13" viewBox="0 0 13 13"><path d="M2 6.400L5 9.900L10.900 2.800" stroke="#2a2a2a" stroke-width="1.150" fill="none"/></svg>
<div style="left:548px;top:508px;width:13px;height:13px;background:#fff;background:#fff;border:1px solid #333;"></div>
<div style="left:548px;top:526px;width:13px;height:13px;background:#fff;background:#fff;border:1px solid #333;"></div>
<span style="left:563.2px;top:488px;font-size:11px;line-height:13px;color:#000;letter-spacing:-0.20px;">Spausdinti budėjimus asmeniniuose tvarkaraščiuose</span>
<span style="left:563.2px;top:509px;font-size:11px;line-height:13px;color:#000;letter-spacing:-0.16px;">Spausdinti budėjimus bendruose tvarkaraščiuose</span>
<span style="left:563.2px;top:527px;font-size:11px;line-height:13px;color:#000;letter-spacing:-0.09px;">Atspausdinti kabinetų priežiūrą spalvotai</span>
<span style="left:461.5px;top:575px;font-size:11px;line-height:13px;color:#000;letter-spacing:-0.11px;">Tekstas tvarkaraščio apačioje - palikus tuščią, bus spausdinama jo sudarymo data</span>
<div style="left:462px;top:599px;width:351px;height:21px;background:#fff;border:1px solid #7a7a7a;"></div>
<div style="left:444px;top:673px;width:133px;height:22px;background:#e1e1e1;border:1px solid #adadad;"></div>
<span style="left:498.3px;top:678px;font-size:11px;line-height:13px;color:#000;letter-spacing:0.05px;">Įkelti</span>
<div style="left:735px;top:673px;width:180px;height:22px;background:#e1e1e1;border:1px solid #adadad;"></div>
<span style="left:767.7px;top:678px;font-size:11px;line-height:13px;color:#000;letter-spacing:-0.03px;">Parinkti stand. sp. stilių</span>
<div style="left:927px;top:674px;width:93px;height:21px;background:#e1e1e1;border:2px solid #0078d7;"></div>
<span style="left:964.9px;top:678px;font-size:11px;line-height:13px;color:#000;letter-spacing:-0.95px;">OK</span>
</div></body></html>
